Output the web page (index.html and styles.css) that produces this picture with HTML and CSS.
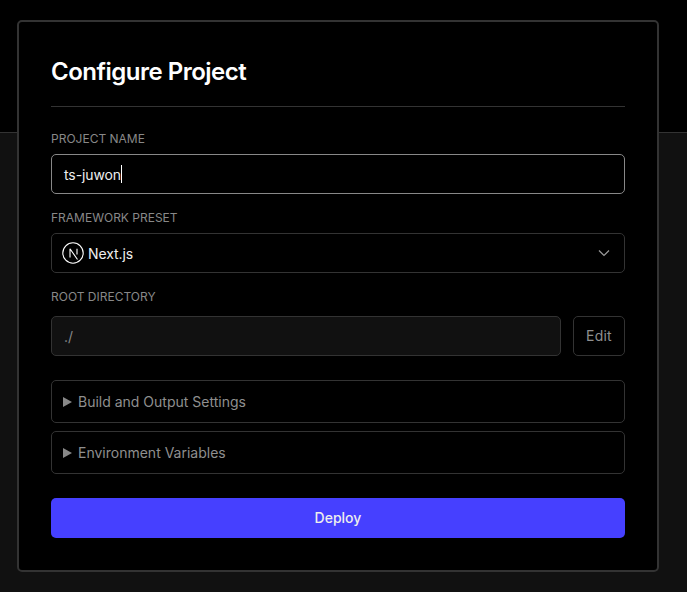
FILE: index.html
```html
<!DOCTYPE html>
<html lang="en">
<head>
  <meta charset="UTF-8">
  <meta name="viewport" content="width=device-width, initial-scale=1.0">
  <title>Configure Project</title>
  <link rel="stylesheet" href="styles.css">
</head>
<body>
  <div class="card">
    <h1>Configure Project</h1>

    <div class="field-label first">PROJECT NAME</div>
    <div class="box box-active"><span>ts-juwon</span><span class="caret"></span></div>

    <div class="field-label">FRAMEWORK PRESET</div>
    <div class="box box-select">
      <svg class="next-logo" width="22" height="22" viewBox="0 0 22 22" fill="none" stroke="#fff">
        <circle cx="11" cy="11" r="10.2" stroke-width="1.1"/>
        <path d="M8 15.5V6.8M8 6.8L15.5 17.5M15 6.8V12.5" stroke-width="1.1"/>
      </svg>
      <span class="select-text">Next.js</span>
      <svg class="chevron" width="12" height="12" viewBox="0 0 12 12" fill="none" stroke="#999" stroke-width="1.2">
        <path d="M1 3.5L6 8.5L11 3.5"/>
      </svg>
    </div>

    <div class="field-label root-label">ROOT DIRECTORY</div>
    <div class="root-row">
      <div class="box box-disabled">./</div>
      <div class="edit-btn">Edit</div>
    </div>

    <div class="section first-section"><span class="arrow"></span>Build and Output Settings</div>
    <div class="section"><span class="arrow"></span>Environment Variables</div>

    <div class="deploy">Deploy</div>
  </div>
</body>
</html>
```

FILE: styles.css
```css
html, body {
  height: 100%;
}
body {
  font-family: 'Inter', sans-serif;
  margin: 0;
  padding: 20px 0 0 17px;
  box-sizing: border-box;
  overflow: hidden;
  background: linear-gradient(#000 132px, #333 132px, #333 133px, #111 133px);
  color: #fff;
}
.card {
  width: 642px;
  box-sizing: border-box;
  padding: 32px;
  background-color: #000;
  border: 2px solid #333;
  border-radius: 5px;
}
h1 {
  margin: 0;
  padding-bottom: 16px;
  font-size: 24px;
  line-height: 36px;
  font-weight: 600;
  letter-spacing: -0.5px;
  border-bottom: 1px solid #333;
}
.field-label {
  margin: 16px 0 7px;
  font-size: 12px;
  line-height: 16px;
  color: #888;
}
.field-label.first {
  margin-top: 24px;
}
.field-label.root-label {
  margin-bottom: 11px;
}
.box {
  display: flex;
  align-items: center;
  height: 40px;
  box-sizing: border-box;
  padding: 0 12px;
  font-size: 14px;
  letter-spacing: -0.1px;
  color: #eee;
  border: 1px solid #333;
  border-radius: 5px;
}
.box-active {
  border-color: #888;
}
.caret {
  width: 1px;
  height: 18px;
  background-color: #fff;
}
.box-select {
  padding-left: 10px;
}
.select-text {
  flex: 1;
  margin-left: 4px;
}
.chevron {
  margin-right: 2px;
}
.root-row {
  display: flex;
  gap: 12px;
}
.box-disabled {
  flex: 1;
  background-color: #111;
  color: #888;
}
.edit-btn {
  width: 52px;
  height: 40px;
  box-sizing: border-box;
  line-height: 38px;
  text-align: center;
  font-size: 14px;
  letter-spacing: 0.2px;
  color: #8f8f8f;
  border: 1px solid #333;
  border-radius: 5px;
}
.section {
  display: flex;
  align-items: center;
  height: 43px;
  box-sizing: border-box;
  margin-top: 8px;
  padding-left: 11px;
  font-size: 14px;
  color: #8f8f8f;
  border: 1px solid #333;
  border-radius: 5px;
}
.first-section {
  margin-top: 24px;
}
.arrow {
  width: 0;
  height: 0;
  margin-right: 6px;
  border-left: 9px solid #888;
  border-top: 5px solid transparent;
  border-bottom: 5px solid transparent;
}
.deploy {
  height: 40px;
  margin-top: 24px;
  line-height: 40px;
  text-align: center;
  font-size: 14px;
  font-weight: 500;
  color: #eee;
  background-color: #4640ff;
  border-radius: 5px;
}
```
